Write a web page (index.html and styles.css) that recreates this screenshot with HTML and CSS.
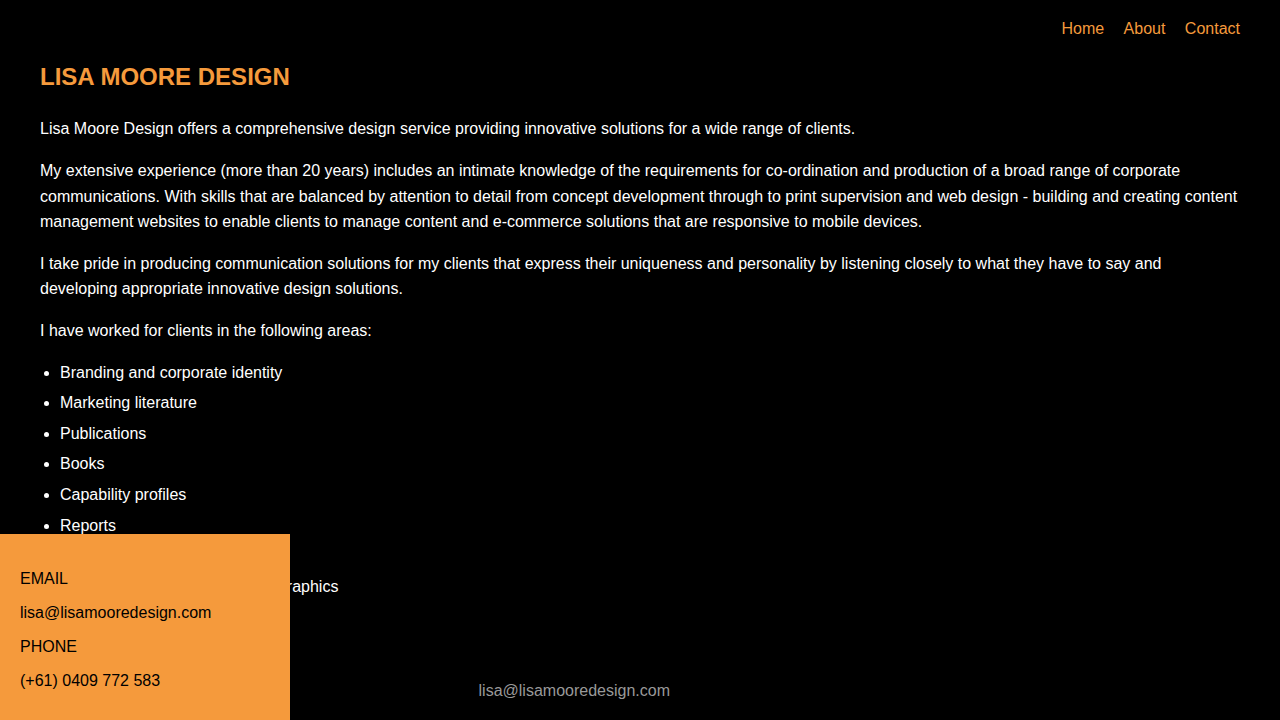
FILE: index.html
```html
<!DOCTYPE html>
<html lang="en">
<head>
<meta charset="utf-8">
<title>Lisa Moore Design</title>
<link rel="stylesheet" href="styles.css">
</head>
<body>
<header class="site-header">
<nav class="site-nav">
<a href="#home">Home</a>
<a href="#about">About</a>
<a href="#contact">Contact</a>
</nav>
</header>
<main class="content" id="about">
<h1 class="title">LISA MOORE DESIGN</h1>
<p>Lisa Moore Design offers a comprehensive design service providing innovative solutions for a wide range of clients.</p>
<p>My extensive experience (more than 20 years) includes an intimate knowledge of the requirements for co-ordination and production of a broad range of corporate communications. With skills that are balanced by attention to detail from concept development through to print supervision and web design - building and creating content management websites to enable clients to manage content and e-commerce solutions that are responsive to mobile devices.</p>
<p>I take pride in producing communication solutions for my clients that express their uniqueness and personality by listening closely to what they have to say and developing appropriate innovative design solutions.</p>
<p>I have worked for clients in the following areas:</p>
<ul class="areas">
<li>Branding and corporate identity</li>
<li>Marketing literature</li>
<li>Publications</li>
<li>Books</li>
<li>Capability profiles</li>
<li>Reports</li>
<li>Websites</li>
<li>Exhibitions and environmental graphics</li>
</ul>
</main>
<footer class="site-footer"><a href="mailto:lisa@lisamooredesign.com">lisa@lisamooredesign.com</a></footer>
<aside class="contact-card" id="contact">
<p>EMAIL</p>
<p>lisa@lisamooredesign.com</p>
<p>PHONE</p>
<p>(+61) 0409 772 583</p>
</aside>
</body>
</html>
```
FILE: styles.css
```css
* {
  box-sizing: border-box;
}

body {
  margin: 0;
  min-height: 100vh;
  display: flex;
  flex-direction: column;
  background: #000;
  color: #fff;
  font-family: "Liberation Sans", Arial, sans-serif;
  font-size: 16px;
  line-height: 1.6;
}

a {
  text-decoration: none;
}

.site-header {
  padding: 20px 40px 0;
  line-height: 18px;
}

.site-nav {
  text-align: right;
}

.site-nav a {
  margin-left: 15px;
  color: #f59a3c;
}

.content {
  padding: 20px 40px 0;
}

.title {
  margin: 0 0 20px;
  color: #f59a3c;
  font-size: 24px;
}

.content p {
  margin: 0 0 16px;
}

.areas {
  margin: 0;
  padding-left: 20px;
}

.areas li {
  margin-bottom: 5px;
}

.site-footer {
  margin-top: auto;
  padding: 0 610px 20px 40px;
  line-height: 18px;
  text-align: right;
}

.site-footer a {
  color: #999;
}

.contact-card {
  position: fixed;
  left: 0;
  bottom: 0;
  width: 290px;
  padding: 20px 20px 14px;
  background: #f59a3c;
  color: #000;
  line-height: 18px;
}

.contact-card p {
  margin: 16px 0;
}
```
